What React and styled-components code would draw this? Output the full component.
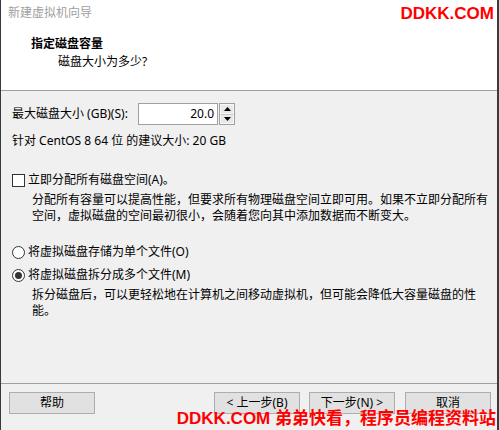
import React from 'react';
import styled, { createGlobalStyle } from 'styled-components';

const GlobalStyle = createGlobalStyle`
  html, body {
    margin: 0;
    padding: 0;
    background: #f0f0f0;
  }
  body {
    font-family: "Noto Sans", "Noto Sans CJK SC", sans-serif;
    font-size: 12px;
    color: #000;
  }
`;

const Window = styled.div`
  position: relative;
  width: 499px;
  height: 430px;
  box-sizing: border-box;
  border-left: 1px solid #3a3a3a;
  border-right: 2px solid #3a3a3a;
  display: flex;
  flex-direction: column;
  background: #f0f0f0;
  overflow: hidden;
`;

const Header = styled.div`
  height: 85px;
  flex: none;
  background: #fff;
  border-bottom: 1px solid #a0a0a0;
  padding: 5px 0 0 7px;
  box-sizing: content-box;
`;

const WindowTitle = styled.div`
  color: #a0a0a0;
  line-height: 16px;
`;

const Heading = styled.div`
  font-family: "Noto Sans CJK SC", sans-serif;
  font-weight: bold;
  line-height: 16px;
  margin: 14px 0 0 23px;
`;

const SubHeading = styled.div`
  line-height: 16px;
  margin: 3px 0 0 50px;
`;

const Body = styled.div`
  flex: 1;
  padding: 12px 11px 0 11px;
  display: flex;
  flex-direction: column;
`;

const FieldRow = styled.div`
  display: flex;
  align-items: center;
  height: 22px;
`;

const FieldLabel = styled.span`
  width: 126px;
  line-height: 16px;
`;

const NumberBox = styled.div`
  display: flex;
  align-items: stretch;
  height: 22px;
`;

const NumberInput = styled.div`
  width: 80px;
  border: 1px solid #a0a0a0;
  background: #fff;
  text-align: right;
  padding-right: 3px;
  line-height: 20px;
  box-sizing: border-box;
`;

const Spinner = styled.div`
  width: 16px;
  margin-left: 1px;
  border: 1px solid #a0a0a0;
  box-sizing: border-box;
  display: flex;
  flex-direction: column;
`;

const SpinButton = styled.div`
  flex: 1;
  background: #e8e8e8;
  border: 1px solid #f8f8f8;
  display: flex;
  align-items: center;
  justify-content: center;
  & + & {
    border-top: 1px solid #c8c8c8;
  }
`;

const Line = styled.div`
  line-height: 16px;
  white-space: nowrap;
  margin-top: ${(p) => p.$top || 0}px;
  padding-left: ${(p) => p.$indent || 0}px;
`;

const Option = styled.label`
  display: flex;
  align-items: center;
  gap: 3px;
  line-height: 16px;
  white-space: nowrap;
  margin-top: ${(p) => p.$top || 0}px;
`;

const CheckBox = styled.span`
  width: 13px;
  height: 13px;
  box-sizing: border-box;
  border: 1px solid #333;
  background: #fff;
  flex: none;
`;

const Radio = styled.span`
  width: 13px;
  height: 13px;
  box-sizing: border-box;
  border: 1px solid #333;
  border-radius: 50%;
  background: #fff;
  flex: none;
  display: flex;
  align-items: center;
  justify-content: center;
  &::after {
    content: '';
    width: 7px;
    height: 7px;
    border-radius: 50%;
    background: ${(p) => (p.$checked ? '#333' : 'transparent')};
  }
`;

const Footer = styled.div`
  flex: none;
  height: 38px;
  border-top: 1px solid #a0a0a0;
  padding: 8px 0 0 8px;
  display: flex;
  align-items: flex-start;
`;

const Button = styled.div`
  width: 86px;
  height: 22px;
  box-sizing: border-box;
  border: 1px solid #adadad;
  background: #e1e1e1;
  text-align: center;
  line-height: 20px;
  white-space: nowrap;
  margin-left: ${(p) => p.$gap || 0}px;
`;

const Watermark = styled.div`
  position: absolute;
  color: #ff0000;
  font-family: "Liberation Sans", "Noto Sans CJK SC", sans-serif;
  font-weight: bold;
  font-size: 17px;
  line-height: 20px;
  white-space: nowrap;
`;

const TopMark = styled(Watermark)`
  top: 4px;
  right: 3px;
`;

const BottomMark = styled(Watermark)`
  bottom: 1px;
  right: 1px;
`;

const Arrow = ({ up }) => (
  <svg width="7" height="4" viewBox="0 0 7 4">
    <path d={up ? 'M0 4 L3.5 0 L7 4 Z' : 'M0 0 L3.5 4 L7 0 Z'} fill="#000" />
  </svg>
);

const App = () => {
  return (
    <>
      <GlobalStyle />
      <Window>
        <Header>
          <WindowTitle>新建虚拟机向导</WindowTitle>
          <Heading>指定磁盘容量</Heading>
          <SubHeading>磁盘大小为多少?</SubHeading>
        </Header>
        <Body>
          <FieldRow>
            <FieldLabel>最大磁盘大小 (GB)(S):</FieldLabel>
            <NumberBox>
              <NumberInput>20.0</NumberInput>
              <Spinner>
                <SpinButton><Arrow up /></SpinButton>
                <SpinButton><Arrow /></SpinButton>
              </Spinner>
            </NumberBox>
          </FieldRow>
          <Line $top={8}>针对 CentOS 8 64 位 的建议大小: 20 GB</Line>
          <Option $top={23}>
            <CheckBox />
            立即分配所有磁盘空间(A)。
          </Option>
          <Line $top={4} $indent={20}>
            分配所有容量可以提高性能，但要求所有物理磁盘空间立即可用。如果不立即分配所有
            <br />
            空间，虚拟磁盘的空间最初很小，会随着您向其中添加数据而不断变大。
          </Line>
          <Option $top={20}>
            <Radio />
            将虚拟磁盘存储为单个文件(O)
          </Option>
          <Option $top={7}>
            <Radio $checked />
            将虚拟磁盘拆分成多个文件(M)
          </Option>
          <Line $top={4} $indent={20}>
            拆分磁盘后，可以更轻松地在计算机之间移动虚拟机，但可能会降低大容量磁盘的性
            <br />
            能。
          </Line>
        </Body>
        <Footer>
          <Button>帮助</Button>
          <Button $gap={119}>&lt; 上一步(B)</Button>
          <Button $gap={9}>下一步(N) &gt;</Button>
          <Button $gap={10}>取消</Button>
        </Footer>
        <TopMark>DDKK.COM</TopMark>
        <BottomMark>DDKK.COM 弟弟快看，程序员编程资料站</BottomMark>
      </Window>
    </>
  );
};

export default App;
